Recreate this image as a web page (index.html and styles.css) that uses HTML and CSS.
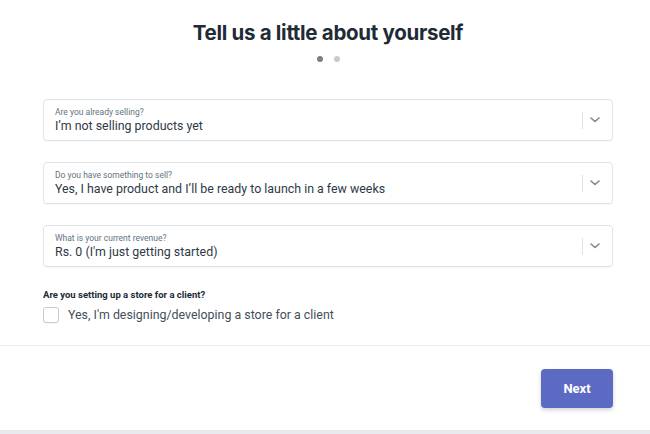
FILE: index.html
```html
<!DOCTYPE html>
<html>
<head>
<meta charset="utf-8">
<link rel="stylesheet" href="styles.css">
</head>
<body>
<div class="page">
  <div class="main">
    <h1 class="title">Tell us a little about yourself</h1>
    <div class="dots"><span class="dot active"></span><span class="dot"></span></div>
    <div class="fields">
      <div class="select">
        <div class="select-text">
          <div class="select-label">Are you already selling?</div>
          <div class="select-value">I’m not selling products yet</div>
        </div>
        <div class="select-sep"></div>
        <svg class="chev" width="10" height="6" viewBox="0 0 10 6"><path d="M1 1 L5 4.5 L9 1" fill="none" stroke="#7d8794" stroke-width="1.6" stroke-linecap="round" stroke-linejoin="round"/></svg>
      </div>
      <div class="select">
        <div class="select-text">
          <div class="select-label">Do you have something to sell?</div>
          <div class="select-value">Yes, I have product and I’ll be ready to launch in a few weeks</div>
        </div>
        <div class="select-sep"></div>
        <svg class="chev" width="10" height="6" viewBox="0 0 10 6"><path d="M1 1 L5 4.5 L9 1" fill="none" stroke="#7d8794" stroke-width="1.6" stroke-linecap="round" stroke-linejoin="round"/></svg>
      </div>
      <div class="select">
        <div class="select-text">
          <div class="select-label">What is your current revenue?</div>
          <div class="select-value">Rs. 0 (I'm just getting started)</div>
        </div>
        <div class="select-sep"></div>
        <svg class="chev" width="10" height="6" viewBox="0 0 10 6"><path d="M1 1 L5 4.5 L9 1" fill="none" stroke="#7d8794" stroke-width="1.6" stroke-linecap="round" stroke-linejoin="round"/></svg>
      </div>
    </div>
    <div class="question">Are you setting up a store for a client?</div>
    <label class="check"><span class="box"></span><span class="check-text">Yes, I'm designing/developing a store for a client</span></label>
  </div>
  <div class="footer">
    <button class="next">Next</button>
  </div>
  <div class="bottom-bar"></div>
</div>
</body>
</html>
```

FILE: styles.css
```css
* { box-sizing: border-box; }
html, body { margin: 0; padding: 0; background: #fff; }
body { font-family: Roboto, "Liberation Sans", sans-serif; color: #212b36; }
.page { width: 650px; height: 434px; display: flex; flex-direction: column; }
.main { padding: 19px 37px 0 43px; }
.title {
  margin: 0;
  text-align: center;
  font-family: Inter, "Liberation Sans", sans-serif;
  font-weight: 700;
  font-size: 20.5px;
  line-height: 28px;
  color: #212b36;
  letter-spacing: -0.3px;
}
.dots { display: flex; justify-content: center; gap: 11px; margin-top: 9px; }
.dot { width: 6px; height: 6px; border-radius: 50%; background: #c8cbcf; }
.dot.active { background: #7c7f84; }
.fields { margin-top: 37px; display: flex; flex-direction: column; gap: 21px; }
.select {
  height: 42px;
  border: 1px solid #dfe3e8;
  border-radius: 4px;
  display: flex;
  align-items: center;
  padding: 0 12px 0 11px;
  box-shadow: 0 1px 1px rgba(0,0,0,0.04);
}
.select-text { flex: 1; min-width: 0; padding-top: 1px; }
.select-label { font-size: 8.5px; line-height: 10px; color: #637381; }
.select-value { font-size: 12.4px; line-height: 16px; color: #2f3a45; margin-top: 1px; white-space: nowrap; }
.select-sep { width: 1px; height: 17px; background: #dfe3e8; margin-right: 7px; }
.chev { display: block; }
.question {
  margin-top: 22px;
  font-size: 9.5px;
  font-weight: 700;
  color: #212b36;
  line-height: 12px;
}
.check { display: flex; align-items: center; margin-top: 6px; gap: 9px; }
.box { width: 16px; height: 16px; border: 1px solid #c4cdd5; border-radius: 3px; background: #fff; box-shadow: 0 1px 1px rgba(0,0,0,0.04); }
.check-text { font-size: 12.4px; color: #454f5b; line-height: 16px; }
.footer {
  margin-top: 22px;
  border-top: 1px solid #ebebeb;
  flex: 1;
  display: flex;
  justify-content: flex-end;
  align-items: flex-start;
  padding: 23px 37px 0 0;
}
.next {
  width: 72px;
  height: 39px;
  border: none;
  border-radius: 4px;
  background: #5c6ac4;
  color: #fff;
  font-family: Roboto, "Liberation Sans", sans-serif;
  font-weight: 700;
  font-size: 13px;
  box-shadow: 0 2px 4px rgba(0,0,0,0.18);
}
.bottom-bar { height: 4px; background: #e8eaed; }
```
